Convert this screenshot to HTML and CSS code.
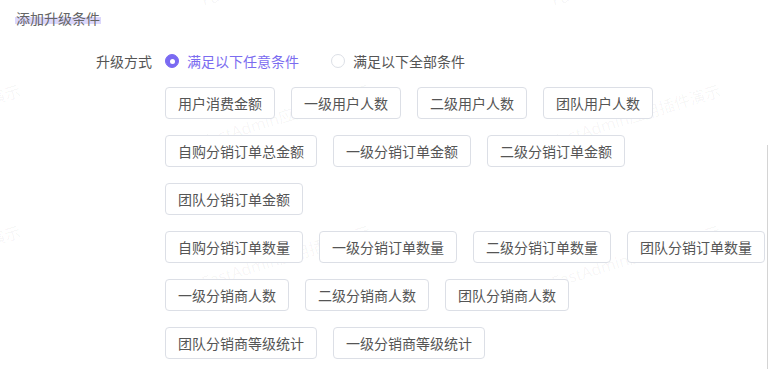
FILE: index.html
```html
<!DOCTYPE html>
<html lang="zh-CN">
<head>
<meta charset="utf-8">
<title>添加升级条件</title>
<link rel="stylesheet" href="styles.css">
</head>
<body>
<div class="watermarks" aria-hidden="true">
  <span class="wm" style="left:-145px;top:-10px">FastAdmin应用插件演示</span>
  <span class="wm" style="left:205px;top:-10px">FastAdmin应用插件演示</span>
  <span class="wm" style="left:555px;top:-10px">FastAdmin应用插件演示</span>
  <span class="wm" style="left:-145px;top:131px">FastAdmin应用插件演示</span>
  <span class="wm" style="left:205px;top:131px">FastAdmin应用插件演示</span>
  <span class="wm" style="left:555px;top:131px">FastAdmin应用插件演示</span>
  <span class="wm" style="left:-145px;top:272px">FastAdmin应用插件演示</span>
  <span class="wm" style="left:205px;top:272px">FastAdmin应用插件演示</span>
  <span class="wm" style="left:555px;top:272px">FastAdmin应用插件演示</span>
</div>
<div class="side-line" aria-hidden="true"></div>

<div class="page">
  <h3 class="title"><span class="title-text">添加升级条件</span></h3>

  <div class="form-row">
    <label class="form-label">升级方式</label>
    <div class="radios">
      <label class="radio checked"><span class="radio-dot"></span><span class="radio-text">满足以下任意条件</span></label>
      <label class="radio"><span class="radio-dot"></span><span class="radio-text">满足以下全部条件</span></label>
    </div>
  </div>

  <div class="conditions">
    <div class="group">
      <button class="cond">用户消费金额</button>
      <button class="cond">一级用户人数</button>
      <button class="cond">二级用户人数</button>
      <button class="cond">团队用户人数</button>
    </div>
    <div class="group">
      <button class="cond">自购分销订单总金额</button>
      <button class="cond">一级分销订单金额</button>
      <button class="cond">二级分销订单金额</button>
      <button class="cond">团队分销订单金额</button>
    </div>
    <div class="group">
      <button class="cond">自购分销订单数量</button>
      <button class="cond">一级分销订单数量</button>
      <button class="cond">二级分销订单数量</button>
      <button class="cond">团队分销订单数量</button>
    </div>
    <div class="group">
      <button class="cond">一级分销商人数</button>
      <button class="cond">二级分销商人数</button>
      <button class="cond">团队分销商人数</button>
    </div>
    <div class="group">
      <button class="cond">团队分销商等级统计</button>
      <button class="cond">一级分销商等级统计</button>
    </div>
  </div>
</div>
</body>
</html>
```

FILE: styles.css
```css
* { box-sizing: border-box; }

html, body {
  margin: 0;
  padding: 0;
  background: #ffffff;
  overflow: hidden;
}

body {
  font-family: "Noto Sans CJK SC", "Noto Sans", "Liberation Sans", sans-serif;
  font-size: 14px;
  color: #606266;
  width: 768px;
  height: 369px;
  position: relative;
}

.watermarks {
  position: absolute;
  inset: 0;
  pointer-events: none;
  z-index: 0;
  overflow: hidden;
}

.wm {
  position: absolute;
  font-family: "Noto Sans", "Noto Sans CJK SC", sans-serif;
  font-size: 16px;
  line-height: 20px;
  white-space: nowrap;
  color: rgba(0, 0, 0, 0.045);
  transform: rotate(-17deg);
  transform-origin: 0 100%;
}

.side-line {
  position: absolute;
  left: 767px;
  top: 145px;
  width: 1px;
  height: 224px;
  background: #d4d4d4;
}

.page {
  position: relative;
  z-index: 1;
}

.title {
  margin: 0;
  padding: 8px 0 0 16px;
  font-size: 14px;
  font-weight: normal;
  line-height: 20px;
  color: #666666;
}

.title-text {
  display: inline-block;
  padding: 0 1px 0 0;
  margin-left: -1px;
  padding-left: 1px;
  background: linear-gradient(to bottom, transparent 0, transparent 9px, #dcd7fb 9px, #dcd7fb 16px, transparent 16px);
}

.form-row {
  display: flex;
  align-items: center;
  height: 32px;
  margin-top: 17px;
}

.form-label {
  width: 153px;
  padding-right: 1px;
  text-align: right;
  color: #555555;
  line-height: 20px;
}

.radios {
  display: flex;
  align-items: center;
  margin-left: 12px;
  gap: 32px;
}

.radio {
  display: flex;
  align-items: center;
  gap: 8px;
  line-height: 20px;
  color: #555555;
}

.radio-dot {
  width: 14px;
  height: 14px;
  border-radius: 50%;
  border: 1px solid #dcdfe6;
  background: #ffffff;
  position: relative;
  flex: none;
}

.radio.checked .radio-dot {
  background: #7a6af2;
  border-color: #7a6af2;
}

.radio.checked .radio-dot::after {
  content: "";
  position: absolute;
  left: 50%;
  top: 50%;
  width: 5px;
  height: 5px;
  margin: -2.5px 0 0 -2.5px;
  border-radius: 50%;
  background: #ffffff;
}

.radio.checked .radio-text {
  color: #7b6cf0;
}

.conditions {
  margin: 10px 0 0 165px;
  width: 603px;
}

.group {
  display: flex;
  flex-wrap: wrap;
  gap: 16px;
  margin-bottom: 16px;
}

.cond {
  height: 32px;
  padding: 0 12px;
  border: 1px solid #dcdfe6;
  border-radius: 4px;
  background: #ffffff;
  font-family: "Noto Sans CJK SC", "Noto Sans", sans-serif;
  font-size: 14px;
  line-height: 30px;
  color: #555555;
  white-space: nowrap;
  cursor: pointer;
}
```
